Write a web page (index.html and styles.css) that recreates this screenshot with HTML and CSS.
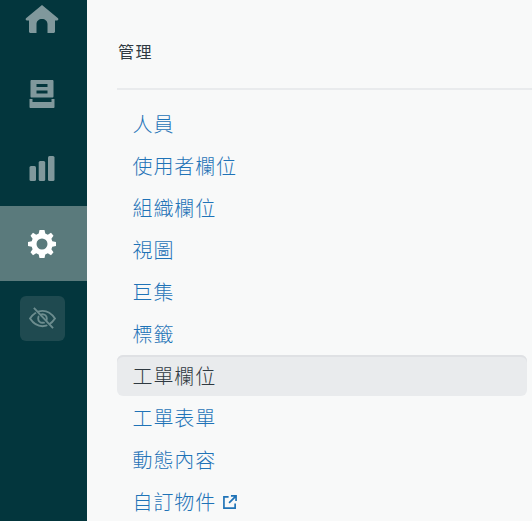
FILE: index.html
```html
<!DOCTYPE html>
<html lang="zh-TW">
<head>
<meta charset="utf-8">
<title>管理</title>
<link rel="stylesheet" href="styles.css">
</head>
<body>
<div class="app">
  <nav class="rail">
    <a class="rail-item"><svg class="icon" viewBox="0 0 34 28"><path d="M17 0 33 13.200C33.800 14 33.200 15.500 32 15.500H30V26.500C30 27.300 29.300 28 28.500 28H22.500V19C22.500 16 20 14 17 14S11.500 16 11.500 19V28H5.500C4.700 28 4 27.300 4 26.500V15.500H2C.8 15.500.2 14 1 13.200Z"/></svg></a>
    <a class="rail-item"><svg class="icon" viewBox="0 0 25 28"><path fill-rule="evenodd" d="M1 1C1 .5 1.500 0 2 0H23C23.500 0 24 .5 24 1V16.500C24 17 23.500 17.500 23 17.500H2C1.500 17.500 1 17 1 16.500ZM7 4V7H18V4ZM7 10.500V13.500H18V10.500Z"/><path d="M0 19H3V22H22V19H25V27C25 27.600 24.500 28 24 28H1C.5 28 0 27.600 0 27Z"/></svg></a>
    <a class="rail-item"><svg class="icon" viewBox="0 0 25 25"><rect x="0" y="10" width="6.500" height="15" rx="1.500"/><rect x="9.200" y="5" width="6.500" height="20" rx="1.500"/><rect x="18.500" y="0" width="6.500" height="25" rx="1.500"/></svg></a>
    <a class="rail-item rail-active"><svg class="icon-gear" viewBox="0 0 28 28"><path fill-rule="evenodd" d="M11.500 0H16.500L17.300 3.600 19.800 4.700 23 2.700 25.500 5.800 23.400 8.800 24.300 11.200 28 12V16L24.300 16.800 23.400 19.300 25.500 22.300 23 25.300 19.800 23.300 17.300 24.400 16.500 28H11.500L10.700 24.400 8.200 23.300 5 25.300 2.500 22.300 4.600 19.300 3.700 16.800 0 16V12L3.700 11.200 4.600 8.800 2.500 5.800 5 2.700 8.200 4.700 10.700 3.600ZM14 8.500A5.500 5.500 0 1 0 14 19.500 5.500 5.500 0 1 0 14 8.500Z"/></svg></a>
    <a class="rail-toggle"><svg class="icon-eye" viewBox="0 0 28 24"><path d="M1 12C5 6 9 4 14 4S23 6 27 12C23 18 19 20 14 20S5 18 1 12Z"/><circle cx="14" cy="12" r="4.500"/><path class="eye-gap" d="M4 1 24 23"/><path d="M5 1 25 22"/></svg></a>
  </nav>
  <main class="panel">
    <h2 class="title">管理</h2>
    <ul class="menu">
      <li class="menu-item">人員</li>
      <li class="menu-item">使用者欄位</li>
      <li class="menu-item">組織欄位</li>
      <li class="menu-item">視圖</li>
      <li class="menu-item">巨集</li>
      <li class="menu-item">標籤</li>
      <li class="menu-item menu-current">工單欄位</li>
      <li class="menu-item">工單表單</li>
      <li class="menu-item">動態內容</li>
      <li class="menu-item">自訂物件<svg class="ext" viewBox="0 0 15 15"><path d="M6 2H1V14H13V9M8.500 1H14V6.500M14 1 6.500 8.500"/></svg></li>
    </ul>
  </main>
</div>
</body>
</html>
```
FILE: styles.css
```css
html, body {
  margin: 0;
  padding: 0;
  height: 100%;
  overflow: hidden;
}
body {
  background: #f8f9f9;
  font-family: "Noto Sans CJK TC", "Noto Sans", sans-serif;
}
.app {
  display: flex;
  height: 521px;
}
.rail {
  width: 87px;
  flex: none;
  background: #03363d;
  display: flex;
  flex-direction: column;
  align-items: center;
  padding-top: 5px;
  box-sizing: border-box;
}
.rail-item {
  display: flex;
  justify-content: center;
  align-items: center;
  height: 28px;
  width: 100%;
  fill: #80989c;
  margin-bottom: 47px;
  padding-right: 3px;
  box-sizing: border-box;
}
.icon { height: 28px; width: 34px; }
.rail-item:nth-child(2) { margin-bottom: 48px; }
.rail-item:nth-child(3) { margin-bottom: 0; height: 25px; }
.rail-item:nth-child(3) .icon { height: 25px; }
.rail-active {
  height: 75px;
  margin: 25px 0 15px;
  background: #5a7a7c;
  fill: #fff;
}
.icon-gear { width: 28px; height: 28px; }
.rail-toggle {
  width: 45px;
  height: 45px;
  margin-right: 2px;
  border-radius: 6px;
  background: #1f4a50;
  display: flex;
  justify-content: center;
  align-items: center;
}
.icon-eye {
  width: 27px;
  height: 23px;
  fill: none;
  stroke: #6d8d8f;
  stroke-width: 2;
}
.icon-eye .eye-gap {
  stroke: #1f4a50;
  stroke-width: 2;
}
.panel {
  flex: 1;
  min-width: 0;
  padding-top: 40px;
  padding-left: 30px;
}
.title {
  margin: 0;
  padding: 0 0 26px 1px;
  font-size: 16px;
  line-height: 22px;
  font-weight: 400;
  letter-spacing: 1.4px;
  color: #2f3941;
  border-bottom: 2px solid #e9ebed;
}
.menu {
  list-style: none;
  margin: 0;
  padding: 13px 5px 0 0;
}
.menu-item {
  height: 42px;
  line-height: 42px;
  padding-left: 15.500px;
  font-size: 20px;
  font-weight: 300;
  letter-spacing: .9px;
  color: #1f73b7;
  display: flex;
  align-items: center;
  box-sizing: border-box;
}
.menu-current {
  height: 41px;
  margin-bottom: 1px;
  padding-top: 1px;
  color: #2f3941;
  background: #e9ebed;
  border-radius: 6px;
  box-shadow: inset 0 2px 0 #dfe1e4;
}
.ext {
  width: 14px;
  height: 14px;
  margin-left: 7px;
  fill: none;
  stroke: #1f73b7;
  stroke-width: 1.800;
}
```
